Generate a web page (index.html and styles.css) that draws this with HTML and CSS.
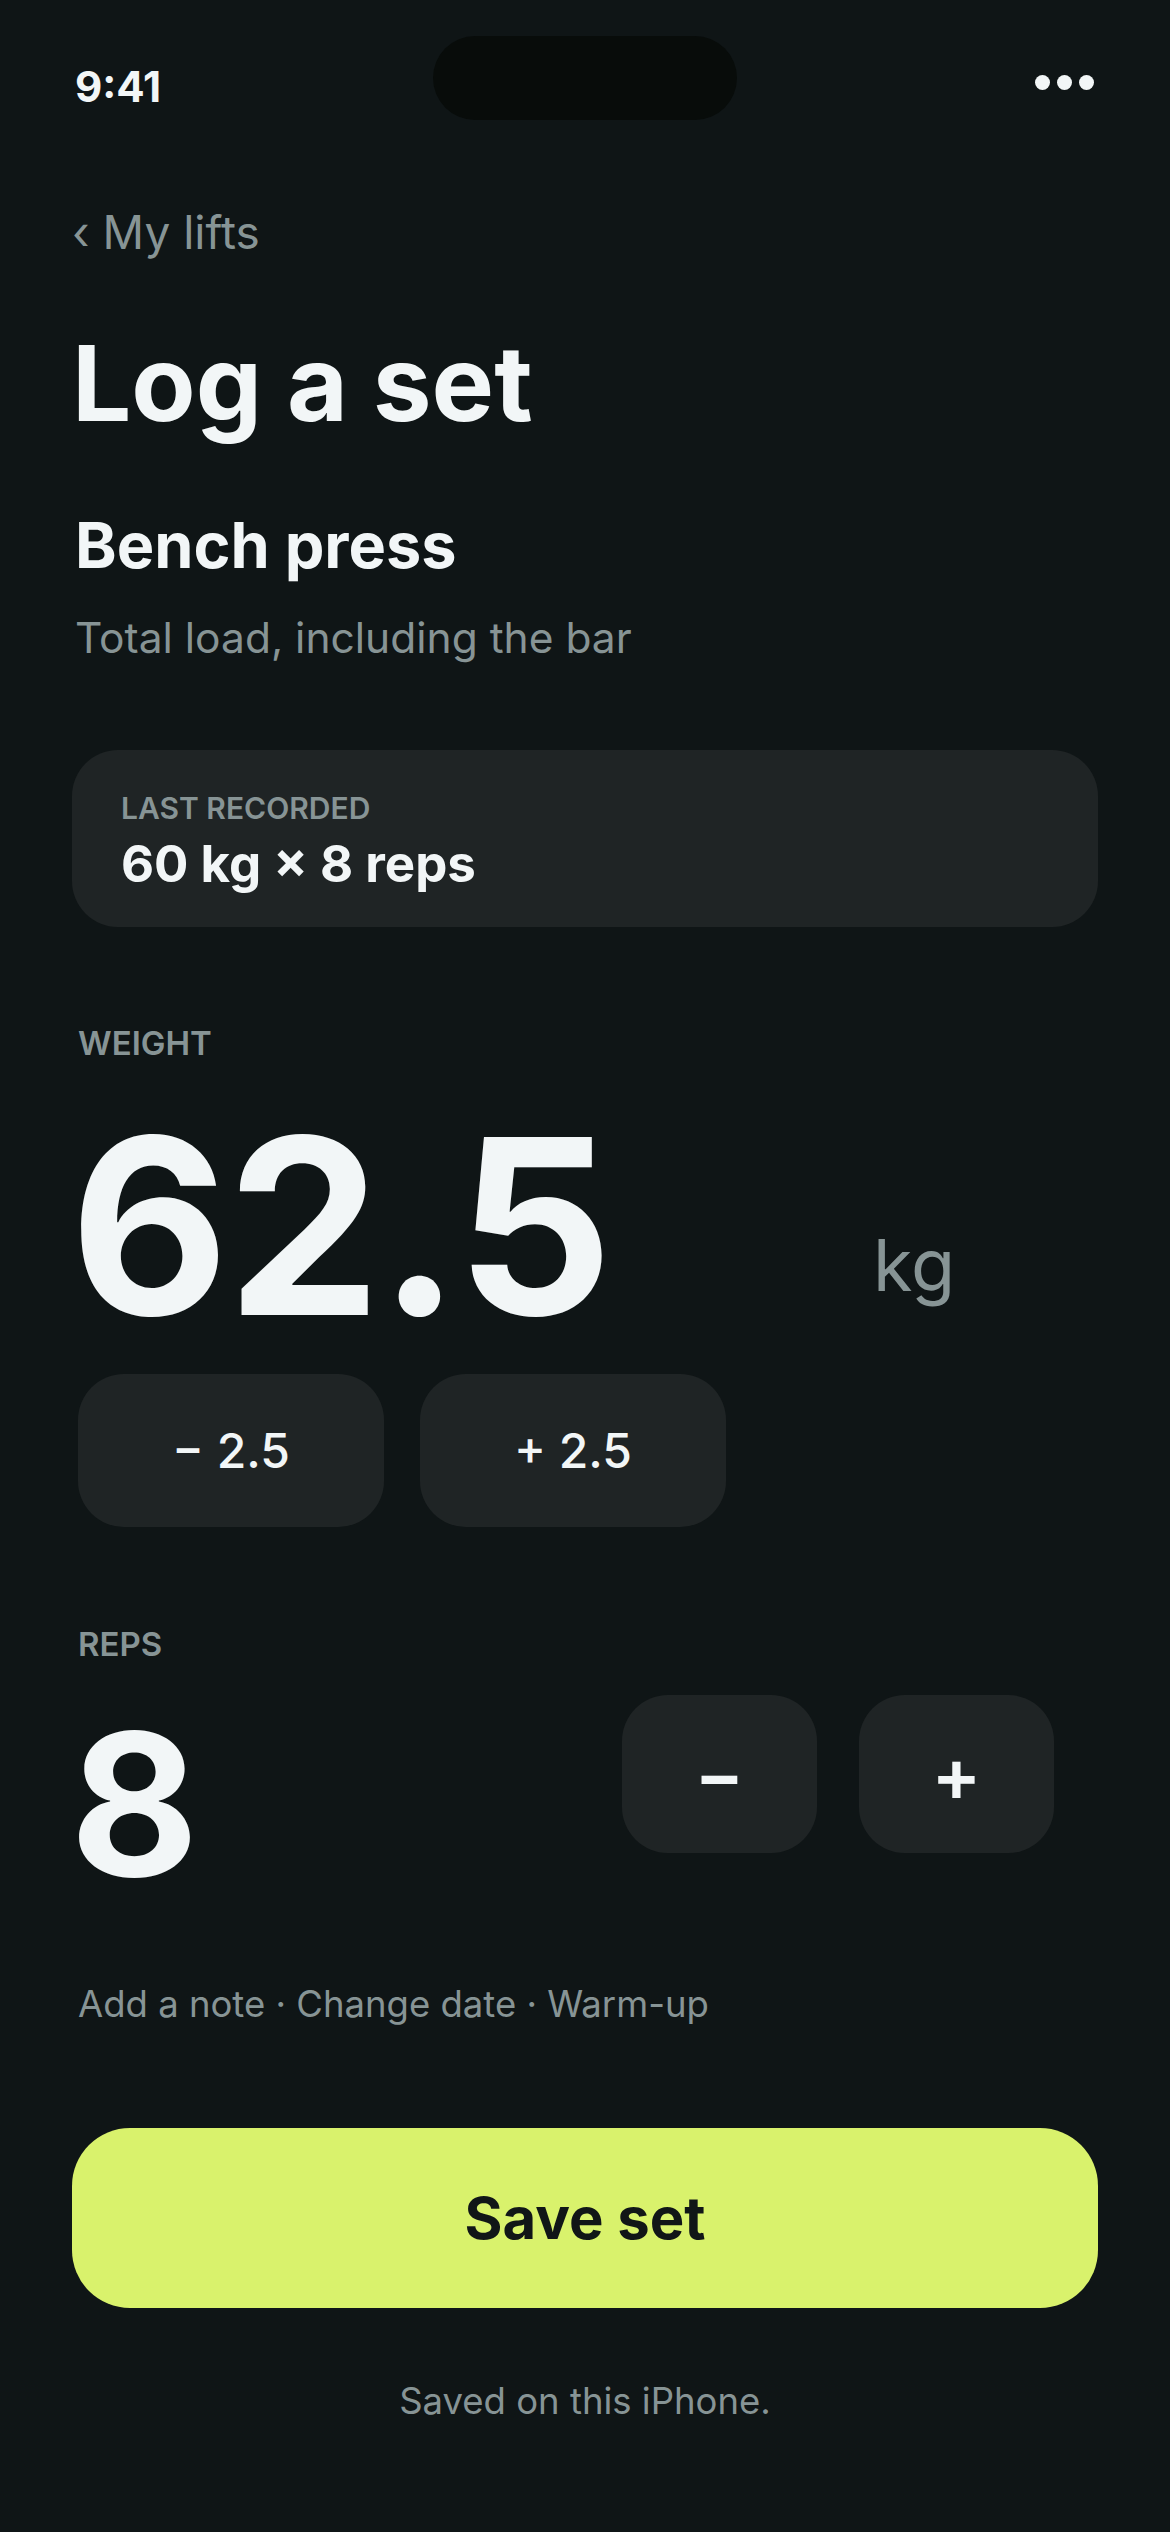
FILE: index.html
```html
<!DOCTYPE html>
<html lang="en">
<head>
<meta charset="utf-8">
<title>Log a set</title>
<link rel="stylesheet" href="styles.css">
</head>
<body>
<div class="screen">
  <header class="status">
    <span class="time">9:41</span>
    <div class="island"></div>
    <span class="dots"><i></i><i></i><i></i></span>
  </header>

  <main class="content">
    <a class="back">‹ My lifts</a>
    <h1 class="title">Log a set</h1>
    <h2 class="exercise">Bench press</h2>
    <p class="hint">Total load, including the bar</p>

    <section class="last">
      <div class="label">LAST RECORDED</div>
      <div class="last-value">60 kg × 8 reps</div>
    </section>

    <section class="field weight">
      <div class="label">WEIGHT</div>
      <div class="weight-row">
        <div class="big-num">62.5</div>
        <div class="unit">kg</div>
      </div>
      <div class="steps">
        <button class="step">− 2.5</button>
        <button class="step">+ 2.5</button>
      </div>
    </section>

    <section class="field reps">
      <div class="label">REPS</div>
      <div class="reps-row">
        <div class="reps-num">8</div>
        <div class="rep-btns">
          <button class="rep-btn">−</button>
          <button class="rep-btn">+</button>
        </div>
      </div>
    </section>

    <p class="extras">Add a note · Change date · Warm-up</p>

    <button class="save">Save set</button>
    <p class="saved">Saved on this iPhone.</p>
  </main>
</div>
</body>
</html>
```

FILE: styles.css
```css
* { box-sizing: border-box; }

html, body {
  margin: 0;
  padding: 0;
  background: #0f1516;
}

body {
  font-family: Inter, "Noto Sans", "Liberation Sans", sans-serif;
  color: #f2f6f7;
  width: 1170px;
  min-height: 2532px;
}

.screen {
  position: relative;
  width: 1170px;
  min-height: 2532px;
}

/* status bar */
.status {
  position: relative;
  display: flex;
  justify-content: space-between;
  align-items: center;
  height: 60px;
  margin-top: 57px;
  padding: 0 76px 0 75px;
}

.time {
  font-size: 42px;
  font-weight: 700;
  line-height: 60px;
}

.island {
  position: absolute;
  left: 433px;
  top: -21px;
  width: 304px;
  height: 84px;
  border-radius: 42px;
  background: #080c0a;
}

.dots {
  display: flex;
  gap: 7px;
  align-self: flex-start;
  margin-top: 18px;
}

.dots i {
  display: block;
  width: 15px;
  height: 15px;
  border-radius: 50%;
  background: #f2f6f7;
}

/* content */
.content {
  padding: 0 72px;
}

.back {
  display: block;
  margin-top: 88px;
  font-size: 46px;
  line-height: 54px;
  color: #879495;
}

.title {
  margin: 65px 0 0;
  font-size: 105px;
  line-height: 117px;
  font-weight: 700;
}

.exercise {
  margin: 73px 0 0;
  padding-left: 3px;
  font-size: 63px;
  line-height: 62px;
  font-weight: 700;
}

.hint {
  margin: 37px 0 0;
  padding-left: 3px;
  font-size: 42.5px;
  line-height: 50px;
  color: #879495;
}

.last {
  margin-top: 87px;
  height: 177px;
  padding: 41px 46px 0 49px;
  border-radius: 46px;
  background: #1f2425;
}

.label {
  font-size: 33px;
  line-height: 36px;
  font-weight: 600;
  color: #879495;
}

.last .label {
  font-size: 30px;
  line-height: 34px;
}

.last-value {
  margin-top: 10px;
  font-size: 51px;
  line-height: 58px;
  font-weight: 700;
}

.field {
  padding: 0 6px;
}

.weight {
  margin-top: 98px;
}

.weight-row {
  display: flex;
  align-items: flex-start;
  margin-top: 34px;
}

.big-num {
  flex: 0 0 795px;
  margin-left: -8px;
  font-size: 245px;
  line-height: 262px;
  font-weight: 700;
  letter-spacing: -0.01em;
}

.unit {
  margin-top: 131px;
  margin-left: 8px;
  font-size: 72px;
  line-height: 77px;
  color: #879495;
}

.steps {
  display: flex;
  gap: 36px;
  margin-top: 17px;
}

button {
  font-family: inherit;
  border: 0;
  padding: 0;
  color: #f2f6f7;
  background: #1f2425;
}

.step {
  width: 306px;
  height: 153px;
  border-radius: 46px;
  font-size: 48px;
  font-weight: 500;
}

.reps {
  margin-top: 99px;
}

.reps-row {
  display: flex;
  align-items: flex-start;
  margin-top: 33px;
}

.reps-num {
  margin-left: -8px;
  font-size: 198px;
  line-height: 218px;
  font-weight: 700;
}

.rep-btns {
  display: flex;
  gap: 42px;
  margin-left: auto;
  margin-right: 38px;
}

.rep-btn {
  width: 195px;
  height: 158px;
  border-radius: 46px;
  font-size: 74px;
  font-weight: 600;
  line-height: 1;
}

.extras {
  margin: 69px 0 0;
  padding: 0 6px;
  font-size: 36.5px;
  line-height: 44px;
  color: #879495;
}

.save {
  display: flex;
  align-items: center;
  justify-content: center;
  width: 100%;
  height: 180px;
  margin-top: 102px;
  border-radius: 58px;
  background: #d9f26c;
  color: #111617;
  font-size: 58px;
  font-weight: 700;
}

.saved {
  margin: 72px 0 0;
  text-align: center;
  font-size: 36.5px;
  line-height: 42px;
  color: #879495;
}
```
